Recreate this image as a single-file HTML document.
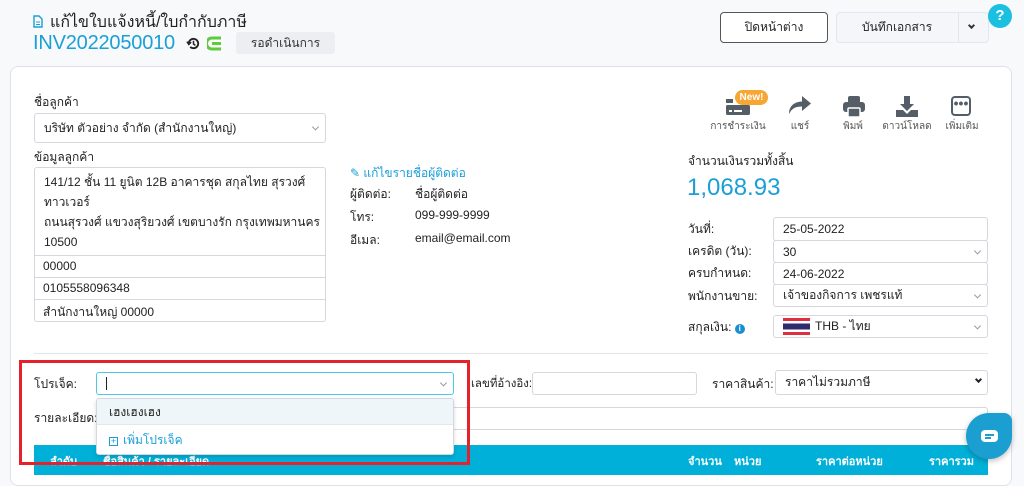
<!DOCTYPE html>
<html><head><meta charset="utf-8"><style>
*{box-sizing:border-box;margin:0;padding:0}
body{width:1024px;height:473px;overflow:hidden;background:#f8f9fb;font-family:"Liberation Sans","Noto Sans CJK SC",sans-serif;font-size:12px;color:#222;position:relative}
.a{position:absolute}
.card{left:10px;top:66px;width:1002px;height:420px;background:#fff;border:1px solid #dfe1ea;border-radius:8px}
.inp{position:absolute;background:#fff;border:1px solid #d4d7de;border-radius:3px;padding-left:9px;display:flex;align-items:center;font-size:12px}
.chev{position:absolute;right:7px;top:50%;width:5px;height:5px;border-right:1px solid #999;border-bottom:1px solid #999;transform:translateY(-70%) rotate(45deg)}
.lbl{position:absolute;font-size:12px;color:#222}
.tb{position:absolute;font-size:10px;color:#555;text-align:center;width:60px}
.th{position:absolute;top:452px;color:#fff;font-size:11px;font-weight:bold}
</style></head><body>
<svg class="a" style="left:33px;top:15px" width="10" height="13" viewBox="0 0 10 13"><path d="M1 1h5l3 3v8H1z" fill="none" stroke="#1a9fd6" stroke-width="1.4"/><path d="M3 7h4M3 9.5h4" stroke="#1a9fd6"/></svg>
<div class="a" style="left:50px;top:10px;font-size:16px">แก้ไขใบแจ้งหนี้/ใบกำกับภาษี</div>
<div class="a" style="left:33px;top:32px;font-size:20px;color:#1a9fd6;letter-spacing:-0.2px">INV2022050010</div>
<svg class="a" style="left:186px;top:36px" width="15" height="15" viewBox="0 0 16 16"><path d="M3 8a5 5 0 1 1 1.5 3.6" fill="none" stroke="#222" stroke-width="2"/><path d="M1 6l2 3 2.5-2.5" fill="none" stroke="#222" stroke-width="1.6"/><path d="M8 5v3.5l2 1.5" fill="none" stroke="#222" stroke-width="1.6"/></svg>
<svg class="a" style="left:207px;top:36px" width="16" height="15" viewBox="0 0 16 15"><path d="M14 2H5a3.5 3.5 0 0 0 0 11h9M5 7.5h9" fill="none" stroke="#5ecb3c" stroke-width="3"/></svg>
<div class="a" style="left:236px;top:32px;width:99px;height:22px;background:#eceef1;border-radius:3px;text-align:center;line-height:22px;font-size:12px;color:#333">รอดำเนินการ</div>
<div class="a" style="left:720px;top:12px;width:108px;height:31px;border:1px solid #555;border-radius:4px;background:#fff;text-align:center;line-height:29px;font-size:12px">ปิดหน้าต่าง</div>
<div class="a" style="left:836px;top:12px;width:153px;height:31px;border:1px solid #e3e6ec;border-radius:4px;background:#f4f6f9"></div>
<div class="a" style="left:836px;top:12px;width:122px;height:31px;text-align:center;line-height:31px;font-size:12px">บันทึกเอกสาร</div>
<div class="a" style="left:958px;top:12px;width:1px;height:31px;background:#e3e6ec"></div>
<div class="a" style="left:969px;top:23px;width:5px;height:5px;border-right:2px solid #333;border-bottom:2px solid #333;transform:rotate(45deg)"></div>
<div class="a" style="left:988px;top:4px;width:24px;height:24px;border-radius:50%;background:#1bbfe0;color:#fff;font-weight:bold;font-size:15px;text-align:center;line-height:24px">?</div>
<div class="a card"></div>
<div class="lbl" style="left:34px;top:93px">ชื่อลูกค้า</div>
<div class="inp" style="left:34px;top:113px;width:292px;height:30px">บริษัท ตัวอย่าง จำกัด (สำนักงานใหญ่)<span class="chev"></span></div>
<div class="lbl" style="left:34px;top:148px">ข้อมูลลูกค้า</div>
<div class="inp" style="left:34px;top:167px;width:292px;height:155px;display:block;padding-top:4px;line-height:20px">141/12 ชั้น 11 ยูนิต 12B อาคารชุด สกุลไทย สุรวงศ์<br>ทาวเวอร์<br>ถนนสุรวงศ์ แขวงสุริยวงศ์ เขตบางรัก กรุงเทพมหานคร<br>10500</div>
<div class="a" style="left:34px;top:255px;width:292px;height:1px;background:#d4d7de"></div>
<div class="a" style="left:34px;top:277px;width:292px;height:1px;background:#d4d7de"></div>
<div class="a" style="left:34px;top:299px;width:292px;height:1px;background:#d4d7de"></div>
<div class="lbl" style="left:43px;top:259px">00000</div>
<div class="lbl" style="left:43px;top:281px">0105558096348</div>
<div class="lbl" style="left:43px;top:303px">สำนักงานใหญ่ 00000</div>
<div class="lbl" style="left:350px;top:164px;color:#1a9fd6">✎ แก้ไขรายชื่อผู้ติดต่อ</div>
<div class="lbl" style="left:350px;top:185px">ผู้ติดต่อ:</div><div class="lbl" style="left:415px;top:185px">ชื่อผู้ติดต่อ</div>
<div class="lbl" style="left:350px;top:208px">โทร:</div><div class="lbl" style="left:415px;top:208px">099-999-9999</div>
<div class="lbl" style="left:350px;top:231px">อีเมล:</div><div class="lbl" style="left:415px;top:231px">email@email.com</div>
<svg class="a" style="left:726px;top:99px" width="24" height="16" viewBox="0 0 24 16"><rect x="0" y="0" width="7" height="4" fill="#555e66"/><rect x="0" y="6" width="24" height="10" rx="1.5" fill="#555e66"/><rect x="3" y="11" width="3" height="2" fill="#fff"/><rect x="8" y="11" width="8" height="2" fill="#fff"/></svg>
<div class="a" style="left:735px;top:90px;width:33px;height:15px;border-radius:8px;background:#f7a533;color:#fff;font-size:10px;font-weight:bold;text-align:center;line-height:15px">New!</div>
<div class="tb" style="left:708px;top:119px">การชำระเงิน</div>
<svg class="a" style="left:789px;top:96px" width="22" height="19" viewBox="0 0 22 19"><path d="M13 0l9 7.5-9 7.5v-4.5C7 10.5 3 12 0 18c0-7 4-12 13-12.5z" fill="#555e66"/></svg>
<div class="tb" style="left:770px;top:119px">แชร์</div>
<svg class="a" style="left:843px;top:96px" width="22" height="21" viewBox="0 0 22 21"><rect x="5" y="0" width="12" height="7" rx="2" fill="#555e66"/><rect x="0" y="6" width="22" height="10" rx="3" fill="#555e66"/><rect x="5" y="12" width="12" height="9" rx="1" fill="#555e66" stroke="#fff" stroke-width="1.5"/></svg>
<div class="tb" style="left:823px;top:119px">พิมพ์</div>
<svg class="a" style="left:896px;top:96px" width="22" height="21" viewBox="0 0 22 21"><path d="M8 0h6v8h4l-7 7-7-7h4z" fill="#555e66"/><path d="M0 14h7l4 4 4-4h7v7H0z" fill="#555e66"/></svg>
<div class="tb" style="left:877px;top:119px">ดาวน์โหลด</div>
<div class="a" style="left:951px;top:96px;width:20px;height:20px;border:2px solid #555e66;border-radius:4px;text-align:center;line-height:10px;font-size:14px;font-weight:bold;color:#555e66">•••</div>
<div class="tb" style="left:932px;top:119px">เพิ่มเติม</div>
<div class="lbl" style="left:688px;top:152px">จำนวนเงินรวมทั้งสิ้น</div>
<div class="a" style="left:687px;top:174px;font-size:24px;color:#1a9fd6">1,068.93</div>
<div class="lbl" style="left:688px;top:220px">วันที่:</div>
<div class="lbl" style="left:688px;top:242px">เครดิต (วัน):</div>
<div class="lbl" style="left:688px;top:264px">ครบกำหนด:</div>
<div class="lbl" style="left:688px;top:287px">พนักงานขาย:</div>
<div class="lbl" style="left:688px;top:318px">สกุลเงิน: <span style="display:inline-block;width:10px;height:10px;border-radius:50%;background:#1a8fd0;color:#fff;font-size:8px;text-align:center;line-height:10px;font-weight:bold">i</span></div>
<div class="inp" style="left:773px;top:217px;width:215px;height:24px">25-05-2022</div>
<div class="inp" style="left:773px;top:240px;width:215px;height:23px">30<span class="chev"></span></div>
<div class="inp" style="left:773px;top:262px;width:215px;height:23px">24-06-2022</div>
<div class="inp" style="left:773px;top:284px;width:215px;height:23px">เจ้าของกิจการ เพชรแท้<span class="chev"></span></div>
<div class="inp" style="left:773px;top:315px;width:215px;height:23px"><svg width="27" height="17" viewBox="0 0 27 17" style="margin-right:5px"><rect width="27" height="17" fill="#e03040"/><rect y="3" width="27" height="11" fill="#fff"/><rect y="5.5" width="27" height="6" fill="#2d2a6e"/></svg>THB - ไทย<span class="chev"></span></div>
<div class="a" style="left:34px;top:353px;width:954px;height:1px;background:#e3e5ea"></div>
<div class="lbl" style="left:34px;top:375px">โปรเจ็ค:</div>
<div class="inp" style="left:96px;top:372px;width:358px;height:23px;border-color:#4cc9e8"><span style="width:1px;height:13px;background:#222"></span><span class="chev"></span></div>
<div class="lbl" style="left:471px;top:375px;font-size:11.5px">เลขที่อ้างอิง:</div>
<div class="inp" style="left:532px;top:372px;width:165px;height:23px"></div>
<div class="lbl" style="left:712px;top:375px">ราคาสินค้า:</div>
<div class="inp" style="left:775px;top:370px;width:213px;height:25px">ราคาไม่รวมภาษี<span style="position:absolute;right:6px;top:6px;width:5px;height:5px;border-right:2px solid #222;border-bottom:2px solid #222;transform:rotate(45deg)"></span></div>
<div class="lbl" style="left:34px;top:409px">รายละเอียด:</div>
<div class="inp" style="left:96px;top:407px;width:892px;height:23px"></div>
<div class="a" style="left:34px;top:445px;width:954px;height:30px;background:#00b0d8"></div>
<div class="th" style="left:50px">ลำดับ</div>
<div class="th" style="left:103px">ชื่อสินค้า / รายละเอียด</div>
<div class="th" style="left:688px">จำนวน</div>
<div class="th" style="left:734px">หน่วย</div>
<div class="th" style="left:816px">ราคาต่อหน่วย</div>
<div class="th" style="left:929px">ราคารวม</div>
<div class="a" style="left:96px;top:398px;width:358px;height:57px;background:#fff;border:1px solid #d4d7de;border-radius:3px;box-shadow:0 2px 4px rgba(0,0,0,.15);overflow:hidden">
<div style="height:26px;background:#eef6fa;border-bottom:1px solid #e3e8ec;padding-left:12px;line-height:26px">เฮงเฮงเฮง</div>
<div style="padding-left:12px;line-height:30px;color:#1a9fd6"><span style="display:inline-block;width:9px;height:9px;border:1px solid #1a9fd6;font-size:9px;line-height:7px;text-align:center;margin-right:5px">+</span>เพิ่มโปรเจ็ค</div>
</div>
<div class="a" style="left:19px;top:360px;width:451px;height:105px;border:3px solid #e5212b"></div>
<div class="a" style="left:966px;top:413px;width:46px;height:46px;background:#1a9fd0;border-radius:50% 8px 50% 50%;box-shadow:0 2px 6px rgba(0,0,0,.25)"></div>
<div class="a" style="left:981px;top:430px;width:17px;height:12px;background:#fff;border-radius:4px"></div>
<div class="a" style="left:985px;top:434px;width:9px;height:1.5px;background:#1a9fd0"></div>
<div class="a" style="left:985px;top:437px;width:6px;height:1.5px;background:#1a9fd0"></div>
</body></html>
